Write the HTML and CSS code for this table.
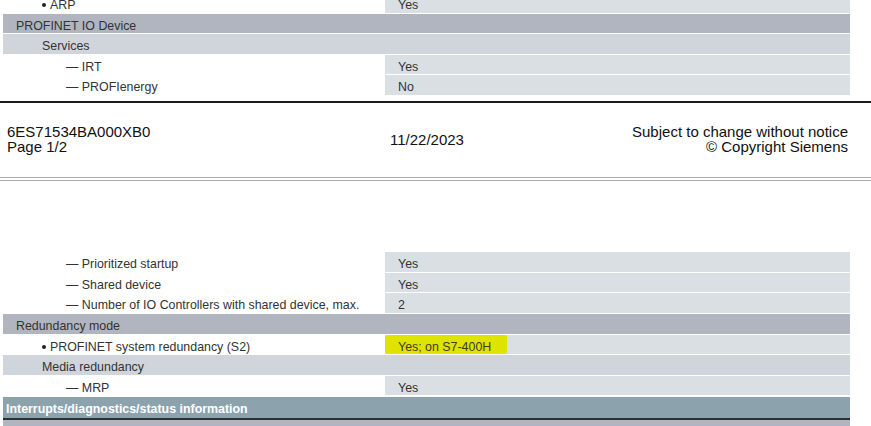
FILE: index.html
```html
<!DOCTYPE html>
<html lang="en">
<head>
<meta charset="utf-8">
<title>6ES71534BA000XB0 datasheet</title>
<link rel="stylesheet" href="styles.css">
</head>
<body>
<div class="sheet">
  <div class="table table-top">
    <div class="row data"><div class="lbl l1"><span class="bullet"></span>ARP</div><div class="val">Yes</div></div>
    <div class="row group"><div class="lbl l0">PROFINET IO Device</div></div>
    <div class="row sub"><div class="lbl l1">Services</div></div>
    <div class="row data"><div class="lbl l2">— IRT</div><div class="val">Yes</div></div>
    <div class="row data"><div class="lbl l2">— PROFIenergy</div><div class="val">No</div></div>
  </div>

  <div class="rule-black"></div>

  <footer class="footer">
    <div class="f-left">6ES71534BA000XB0<br>Page 1/2</div>
    <div class="f-mid">11/22/2023</div>
    <div class="f-right">Subject to change without notice<br>© Copyright Siemens</div>
  </footer>

  <div class="rule-double"></div>

  <div class="table table-bottom">
    <div class="row data"><div class="lbl l2">— Prioritized startup</div><div class="val">Yes</div></div>
    <div class="row data"><div class="lbl l2">— Shared device</div><div class="val">Yes</div></div>
    <div class="row data"><div class="lbl l2">— Number of IO Controllers with shared device, max.</div><div class="val">2</div></div>
    <div class="row group"><div class="lbl l0">Redundancy mode</div></div>
    <div class="row data"><div class="lbl l1"><span class="bullet"></span>PROFINET system redundancy (S2)</div><div class="val marked"><span class="hl">Yes; on S7-400H</span></div></div>
    <div class="row sub"><div class="lbl l1">Media redundancy</div></div>
    <div class="row data"><div class="lbl l2">— MRP</div><div class="val">Yes</div></div>
    <div class="row section"><div class="lbl ls">Interrupts/diagnostics/status information</div></div>
    <div class="row group flush"><div class="lbl l0">Diagnostics indication LED</div></div>
  </div>
</div>
</body>
</html>
```

FILE: styles.css
```css
html, body {
  margin: 0;
  padding: 0;
  background: #ffffff;
}

body {
  font-family: "Liberation Sans", Arial, sans-serif;
  overflow: hidden;
  height: 426px;
}

.sheet {
  width: 871px;
}

.table {
  margin-left: 3px;
  width: 847px;
  font-size: 12.4px;
  color: #333333;
}

.table-top {
  margin-top: -8px;
}

.table-bottom {
  margin-top: 70.4px;
}

.row {
  display: grid;
  grid-template-columns: 382px 1fr;
  height: 20.6px;
  padding-top: 1px;
  box-sizing: border-box;
}

.lbl, .val {
  box-sizing: border-box;
  height: 100%;
  padding-top: 5px;
  line-height: 14px;
  white-space: nowrap;
  overflow: hidden;
}

.val {
  background: #dadfe3;
  padding-left: 13px;
}

.group {
  background: #b0b5bf;
  background-clip: content-box;
}

.sub {
  background: #d0d5dc;
  background-clip: content-box;
}

.group .lbl, .sub .lbl, .section .lbl {
  grid-column: 1 / -1;
}

.section {
  padding-top: 2px;
  background: #8ca3ae;
  background-clip: content-box;
  border-bottom: 2px solid #2e2e2e;
  height: 24.6px;
}

.flush {
  padding-top: 0;
}

.l0 { padding-left: 13px; }
.l1 { padding-left: 39px; }
.l2 { padding-left: 63px; }
.ls {
  padding-left: 3px;
  color: #ffffff;
  font-weight: bold;
}

.bullet {
  display: inline-block;
  width: 4px;
  height: 4px;
  border-radius: 50%;
  background: #222222;
  margin-right: 4px;
  vertical-align: 2px;
}

.val.marked {
  padding-left: 0;
  padding-top: 0;
}

.hl {
  display: inline-block;
  box-sizing: border-box;
  height: 100%;
  padding: 5px 16px 0 13px;
  line-height: 14px;
  background: #dfe300;
  color: #3a3a20;
  border-radius: 2px 1px 3px 2px;
}

.rule-black {
  margin-top: 5.9px;
  height: 2px;
  background: #1a1a1a;
}

.footer {
  display: grid;
  grid-template-columns: 383px 1fr auto;
  align-items: center;
  padding: 21.3px 23px 22.7px 7px;
  font-size: 15px;
  line-height: 15px;
  color: #111111;
}

.f-right {
  text-align: right;
}

.rule-double {
  height: 2px;
  border-top: 1px solid #a9a9a9;
  border-bottom: 1px solid #a9a9a9;
}
```
